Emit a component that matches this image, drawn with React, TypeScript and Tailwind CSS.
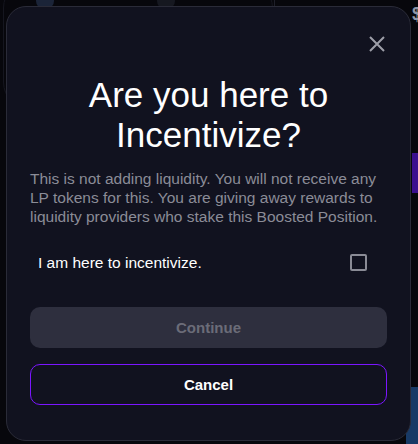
import React, { useState } from 'react';

// ============================================
// INCENTIVIZE MODAL
// ============================================

export default function App() {
  const [checked, setChecked] = useState(false);

  return (
    <div
      className="relative w-[418px] h-[444px] overflow-hidden bg-[#07070c]"
      style={{ fontFamily: '"Liberation Sans", Arial, sans-serif' }}
    >
      {/* Page behind the overlay */}
      <div className="absolute left-[3px] top-[-20px] w-[270px] h-[130px] rounded-[28px] border border-[#15161f]" />
      <div className="absolute left-[36px] top-[-8px] w-[18px] h-[18px] rounded-full bg-[#1b2438]" />
      <div className="absolute left-[157px] top-[-8px] w-[18px] h-[18px] rounded-full bg-[#161820]" />
      <div className="absolute left-[274px] top-0 w-px h-[20px] bg-[#1e1f29]" />
      <div className="absolute left-[412px] top-[2px] text-[18px] leading-[24px] font-bold text-[#8e96a8] w-[6px] overflow-hidden">$</div>
      <div className="absolute left-[412px] top-[153px] w-[10px] h-[40px] bg-[#3b0f8e]" />
      <div className="absolute left-[406px] top-[387px] w-[14px] h-[60px] bg-[#183a66]" />

      {/* Modal */}
      <div className="absolute left-[6px] top-[6px] w-[405px] h-[435px] rounded-[20px] border border-[#2a2b38] bg-[#11121f] flex flex-col px-[23px]">
        <div className="flex justify-end pt-[29px] pr-[2px]">
          <button className="text-[#9d9ea8]">
            <svg width="16" height="16" viewBox="0 0 16 16" fill="none" stroke="currentColor" strokeWidth="2">
              <path d="M1 1 L15 15 M15 1 L1 15" />
            </svg>
          </button>
        </div>

        <h1 className="mt-[23px] text-center text-[35px] leading-[40px] font-normal text-white">
          Are you here to
          <br />
          Incentivize?
        </h1>

        <p className="mt-[14px] text-[15.5px] leading-[19px] text-[#8b8c97]">
          This is not adding liquidity. You will not receive any LP tokens for this. You are giving away rewards to
          liquidity providers who stake this Boosted Position.
        </p>

        <label className="mt-[25px] flex items-center justify-between px-[8px] cursor-pointer">
          <span className="text-[15.5px] text-white">I am here to incentivize.</span>
          <span
            onClick={() => setChecked(!checked)}
            className="w-[17px] h-[17px] rounded-[2px] border-2 border-[#8a8b95] mr-[12px]"
          />
        </label>

        <button
          disabled={!checked}
          className="mt-[33px] h-[41px] shrink-0 rounded-[10px] bg-[#2e2f3e] text-[15px] font-bold text-[#6b6c78]"
        >
          Continue
        </button>

        <button className="mt-[16px] h-[41px] shrink-0 rounded-[10px] border border-[#7b16ff] text-[15px] font-bold text-white">
          Cancel
        </button>
      </div>
    </div>
  );
}
